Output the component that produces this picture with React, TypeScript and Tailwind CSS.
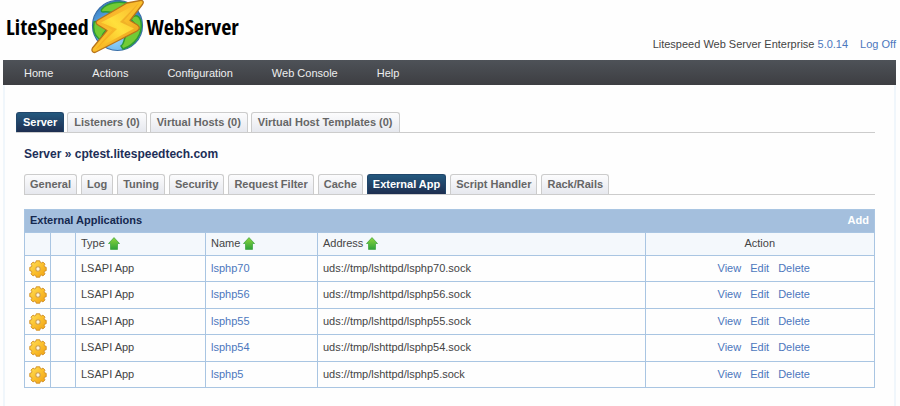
import React from "react";

const mainTabs = ["Server", "Listeners (0)", "Virtual Hosts (0)", "Virtual Host Templates (0)"];
const subTabs = ["General", "Log", "Tuning", "Security", "Request Filter", "Cache", "External App", "Script Handler", "Rack/Rails"];
const menu = ["Home", "Actions", "Configuration", "Web Console", "Help"];
const apps = ["lsphp70", "lsphp56", "lsphp55", "lsphp54", "lsphp5"];

function Globe() {
  return (
    <svg viewBox="0 0 56 54" className="h-[54px] w-[56px] shrink-0" aria-hidden="true">
      <defs>
        <radialGradient id="sea" cx="45%" cy="75%" r="70%">
          <stop offset="0" stopColor="#9ad8fb" />
          <stop offset="0.6" stopColor="#5aa8e4" />
          <stop offset="1" stopColor="#3a7dc2" />
        </radialGradient>
        <linearGradient id="bolt" x1="0" y1="0" x2="1" y2="1">
          <stop offset="0" stopColor="#f3a32a" />
          <stop offset="0.5" stopColor="#fbc02c" />
          <stop offset="1" stopColor="#e08c12" />
        </linearGradient>
        <linearGradient id="facet" x1="1" y1="0" x2="0" y2="1">
          <stop offset="0" stopColor="#f9b52c" />
          <stop offset="0.5" stopColor="#ffe03c" />
          <stop offset="1" stopColor="#f7b020" />
        </linearGradient>
      </defs>
      <circle cx="27.500" cy="25.500" r="25" fill="url(#sea)" stroke="#3a6fa8" strokeWidth="1.200" />
      <path d="M12 9C17 3 28 1 36 3L40 5 28 11C22 14 18 11 13 12 11 12 11 10 12 9Z" fill="#72cb35" stroke="#2c9a35" strokeWidth="1.500" />
      <path d="M4 22C8 20 12 25 17 29L13 34C12 37 11 39 9 39 4 35 3 28 4 22Z" fill="#72cb35" stroke="#2c9a35" strokeWidth="1.500" />
      <path d="M41 19C45 13 50 16 51 22 53 34 45 45 33 49L31 46C35 43 33 40 36 36L49 29C47 25 43 23 41 19Z" fill="#72cb35" stroke="#2c9a35" strokeWidth="1.500" />
      <path
        d="M50 .5L37 3 8 20C5.500 21.500 5.500 23.500 8 25L17 30.500 2.500 48C1 51 3 53.500 6 52L47 31C50 29 50 27 47.500 25L40 20.500 52 5C54.500 2 53 0 50 .5Z"
        fill="url(#bolt)" stroke="#b8741a" strokeWidth="1.300" strokeLinejoin="round"
      />
      <path d="M49 3L11 22.500 22 30 6 49 44 28.500 34 21Z" fill="url(#facet)" />
      <path d="M11 22.500L22 30 6 49 27 29Z" fill="#f2a01c" opacity="0.600" />
      <path d="M49 3L34 21 44 28.500 30 22Z" fill="#e89a1c" opacity="0.600" />
    </svg>
  );
}

function SortArrow() {
  return (
    <svg viewBox="0 0 12 13" className="h-[13px] w-[12px]" aria-hidden="true">
      <defs>
        <linearGradient id="arrow" x1="0" y1="0" x2="0" y2="1">
          <stop offset="0" stopColor="#8ed63c" />
          <stop offset="1" stopColor="#2ea33a" />
        </linearGradient>
      </defs>
      <path d="M6 .6L11.500 6.500H9.500V12.400H2.500V6.500H.5Z" fill="url(#arrow)" stroke="#45a845" strokeWidth="0.800" strokeLinejoin="round" />
    </svg>
  );
}

function Gear() {
  return (
    <svg viewBox="0 0 18 18" className="mx-auto block h-[18px] w-[18px]" aria-hidden="true">
      <defs>
        <linearGradient id="gear" x1="0" y1="0" x2="1" y2="1">
          <stop offset="0" stopColor="#ffe25a" />
          <stop offset="0.5" stopColor="#fbc02d" />
          <stop offset="1" stopColor="#ef9f12" />
        </linearGradient>
      </defs>
      <path
        d="M7.200 .8H10.800L11.300 2.500 12.300 2.900 14 2.100 16 4.100 15.100 5.800 15.500 6.800 17.200 7.300V10.700L15.500 11.200 15.100 12.200 16 13.900 14 15.900 12.300 15.100 11.300 15.500 10.800 17.200H7.200L6.700 15.500 5.700 15.100 4 15.900 2 13.900 2.900 12.200 2.500 11.200.8 10.700V7.300L2.500 6.800 2.900 5.800 2 4.100 4 2.100 5.700 2.900 6.700 2.500Z"
        fill="url(#gear)" stroke="#d08c20" strokeWidth="0.900" strokeLinejoin="round"
      />
      <circle cx="9" cy="9" r="2.200" fill="#fdf6e4" stroke="#cfa050" strokeWidth="1.100" />
    </svg>
  );
}

function Tab({ label, active, pad }: { label: string; active: boolean; pad: string }) {
  return (
    <a
      href="#"
      aria-current={active ? "page" : undefined}
      className={
        "flex h-5 items-center whitespace-nowrap rounded-t-[3px] border border-b-0 pb-[2px] font-bold " +
        pad +
        (active
          ? " border-[#21466a] bg-linear-to-b from-[#24597f] to-[#1d2e50] text-white"
          : " border-[#cccccc] bg-linear-to-b from-[#fcfcfd] to-[#e6e8ee] text-[#666666]")
      }
    >
      {label}
    </a>
  );
}

export default function App() {
  const cell = "border border-[#a9c5e2] px-[5px] pt-0 pb-[2px] text-left font-normal";
  const link = "text-[#4c77bd]";
  return (
    <div className="min-h-screen bg-[#fefefe] pl-[3px] pr-[4px] font-['Liberation_Sans',Arial,sans-serif] text-[11px] leading-[14px] text-[#444444]">
      <header className="flex h-[60px] items-start justify-between">
        <div className="flex items-start gap-px pl-[3px] font-['Liberation_Sans_Narrow','Open_Sans_Condensed','DejaVu_Sans_Condensed',sans-serif] text-[22px] leading-[28px] text-black">
          <span className="pt-3">LiteSpeed</span>
          <Globe />
          <span className="pt-3">WebServer</span>
        </div>
        <div className="flex gap-3 pt-[37px]">
          <span>Litespeed Web Server Enterprise <a href="#" className={link}>5.0.14</a></span>
          <a href="#" className={link}>Log Off</a>
        </div>
      </header>

      <nav className="flex h-[25px] items-center gap-[39px] bg-linear-to-b from-[#4e5258] to-[#3d3e42] pl-[21px] text-[#eeeeee]">
        {menu.map((m) => <a key={m} href="#">{m}</a>)}
      </nav>

      <main className="min-h-[321px] border-x-2 border-[#f0f6fb] pt-[27px] pr-[19px] pl-[11px]">
        <div className="flex gap-[3px] border-b border-[#cccccc]">
          {mainTabs.map((t) => <Tab key={t} label={t} active={t === "Server"} pad="px-[6px]" />)}
        </div>
        <div className="pl-2">
          <h1 className="pt-[14px] pb-[13px] text-[12px] leading-[14px] font-bold text-[#1d2e57]">Server » cptest.litespeedtech.com</h1>
          <div className="flex gap-1 border-b border-[#cccccc]">
            {subTabs.map((t) => <Tab key={t} label={t} active={t === "External App"} pad="px-[5px]" />)}
          </div>
          <table className="mt-[14px] w-full table-fixed border-collapse border border-[#a9c5e2]">
            <colgroup>
              <col className="w-[26px]" />
              <col className="w-[25px]" />
              <col className="w-[130px]" />
              <col className="w-[112px]" />
              <col />
              <col className="w-[27%]" />
            </colgroup>
            <thead>
              <tr className="h-[23px] bg-[#a4bfdd]">
                <th colSpan={5} className="px-[5px] pt-0 pb-[2px] text-left font-bold text-[#14284f]">External Applications</th>
                <th className="px-[5px] pt-0 pb-[2px] text-right font-bold"><a href="#" className="text-white">Add</a></th>
              </tr>
              <tr className="h-[23px] bg-[#f4f8fc]">
                <td className={cell} />
                <td className={cell} />
                {["Type", "Name", "Address"].map((h) => (
                  <th key={h} className={cell}>
                    <a href="#" className="flex items-center gap-[3px]">{h}<SortArrow /></a>
                  </th>
                ))}
                <th className={cell}><div className="text-center">Action</div></th>
              </tr>
            </thead>
            <tbody>
              {apps.map((a) => (
                <tr key={a} className="odd:h-[26px] even:h-[27px]">
                  <td className="border border-[#a9c5e2] p-0"><Gear /></td>
                  <td className={cell} />
                  <td className={cell}>LSAPI App</td>
                  <td className={cell}><a href="#" className={link}>{a}</a></td>
                  <td className={cell}>uds://tmp/lshttpd/{a}.sock</td>
                  <td className={cell}>
                    <div className="flex justify-center gap-[9px] pl-2">
                      <a href="#" className={link}>View</a>
                      <a href="#" className={link}>Edit</a>
                      <a href="#" className={link}>Delete</a>
                    </div>
                  </td>
                </tr>
              ))}
            </tbody>
          </table>
        </div>
      </main>
    </div>
  );
}
